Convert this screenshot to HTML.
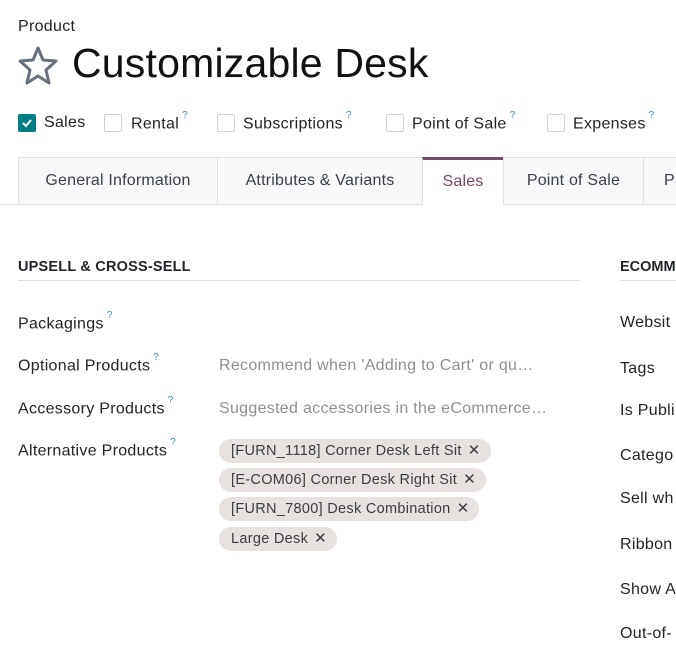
<!DOCTYPE html>
<html><head><meta charset="utf-8"><style>
*{margin:0;padding:0;box-sizing:border-box}
body{width:676px;height:658px;overflow:hidden;background:#fff;font-family:"Liberation Sans","DejaVu Sans",sans-serif;color:#212529;position:relative}
.a{position:absolute;white-space:nowrap}
.cb{position:absolute;width:18px;height:18px;border:1px solid #d0d4d8;border-radius:2px;background:#fff}
.lbl{font-size:16px;letter-spacing:0.3px}
sup{color:#3d8fb3;font-size:10px;position:relative;top:-4px;margin-left:3px}
.tab{position:absolute;top:157px;height:48px;border:1px solid #dee2e6;background:#f8f9fa;font-size:16px;color:#3b3f44;text-align:center;line-height:46px;letter-spacing:0.2px}
.f{font-size:16px;color:#212529;letter-spacing:0.3px}
.ph{font-size:16px;color:#8d9093;letter-spacing:0.3px}
.tag{position:absolute;left:219px;height:24px;border-radius:12px;background:#e7e1e0;font-size:14.5px;line-height:24px;padding:0 10px 0 12px;color:#3b3f44;letter-spacing:0.3px}
.tag b{font-weight:normal;margin-left:6px;font-size:15px}
</style></head><body>
<div class="a" style="left:18px;top:18px;font-size:16px;letter-spacing:0.3px">Product</div>
<svg class="a" style="left:17px;top:45px" width="42" height="40" viewBox="0 0 42 40"><path d="M21 3 L26 15 L39 16 L29 25 L32 38 L21 31 L10 38 L13 25 L3 16 L16 15 Z" fill="none" stroke="#66717b" stroke-width="3" stroke-linejoin="round"/></svg>
<div class="a" style="left:72px;top:40px;font-size:41px;color:#111;letter-spacing:0.2px">Customizable Desk</div>

<div class="cb" style="left:18px;top:114px;background:#017e84;border-color:#017e84"><svg width="16" height="16" viewBox="0 0 16 16"><path d="M4 8 L7 11 L12 5" stroke="#fff" stroke-width="2" fill="none"/></svg></div>
<div class="a lbl" style="left:44px;top:114px">Sales</div>
<div class="cb" style="left:104px;top:114px"></div>
<div class="a lbl" style="left:131px;top:114px">Rental<sup>?</sup></div>
<div class="cb" style="left:217px;top:114px"></div>
<div class="a lbl" style="left:243px;top:114px">Subscriptions<sup>?</sup></div>
<div class="cb" style="left:386px;top:114px"></div>
<div class="a lbl" style="left:412px;top:114px">Point of Sale<sup>?</sup></div>
<div class="cb" style="left:547px;top:114px"></div>
<div class="a lbl" style="left:573px;top:114px">Expenses<sup>?</sup></div>

<div class="a" style="left:0;top:204px;width:676px;height:1px;background:#dee2e6"></div>
<div class="tab" style="left:18px;width:200px">General Information</div>
<div class="tab" style="left:217px;width:206px">Attributes &amp; Variants</div>
<div class="tab" style="left:422px;width:82px;background:#fff;border-bottom-color:#fff;border-top:3px solid #714b67;line-height:44px;color:#714b67">Sales</div>
<div class="tab" style="left:503px;width:141px">Point of Sale</div>
<div class="tab" style="left:643px;width:60px;text-align:left;padding-left:20px">Pr</div>

<div class="a" style="left:18px;top:259px;font-size:14.5px;font-weight:bold;color:#212529;letter-spacing:0.2px">UPSELL &amp; CROSS-SELL</div>
<div class="a" style="left:18px;top:280px;width:562px;height:1px;background:#dee2e6"></div>
<div class="a" style="left:620px;top:259px;font-size:14.5px;font-weight:bold">ECOMM</div>
<div class="a" style="left:620px;top:280px;width:60px;height:1px;background:#dee2e6"></div>

<div class="a f" style="left:18px;top:314px">Packagings<sup>?</sup></div>
<div class="a f" style="left:18px;top:356px">Optional Products<sup>?</sup></div>
<div class="a ph" style="left:219px;top:357px">Recommend when 'Adding to Cart' or qu…</div>
<div class="a f" style="left:18px;top:399px">Accessory Products<sup>?</sup></div>
<div class="a ph" style="left:219px;top:400px">Suggested accessories in the eCommerce…</div>
<div class="a f" style="left:18px;top:441px">Alternative Products<sup>?</sup></div>

<div class="tag" style="top:439px">[FURN_1118] Corner Desk Left Sit<b>✕</b></div>
<div class="tag" style="top:468px">[E-COM06] Corner Desk Right Sit<b>✕</b></div>
<div class="tag" style="top:497px">[FURN_7800] Desk Combination<b>✕</b></div>
<div class="tag" style="top:527px">Large Desk<b>✕</b></div>

<div class="a f" style="left:620px;top:314px">Websit</div>
<div class="a f" style="left:620px;top:360px">Tags</div>
<div class="a f" style="left:620px;top:402px">Is Publi</div>
<div class="a f" style="left:620px;top:447px">Catego</div>
<div class="a f" style="left:620px;top:490px">Sell wh</div>
<div class="a f" style="left:620px;top:536px">Ribbon</div>
<div class="a f" style="left:620px;top:581px">Show A</div>
<div class="a f" style="left:620px;top:625px">Out-of-</div>
</body></html>
